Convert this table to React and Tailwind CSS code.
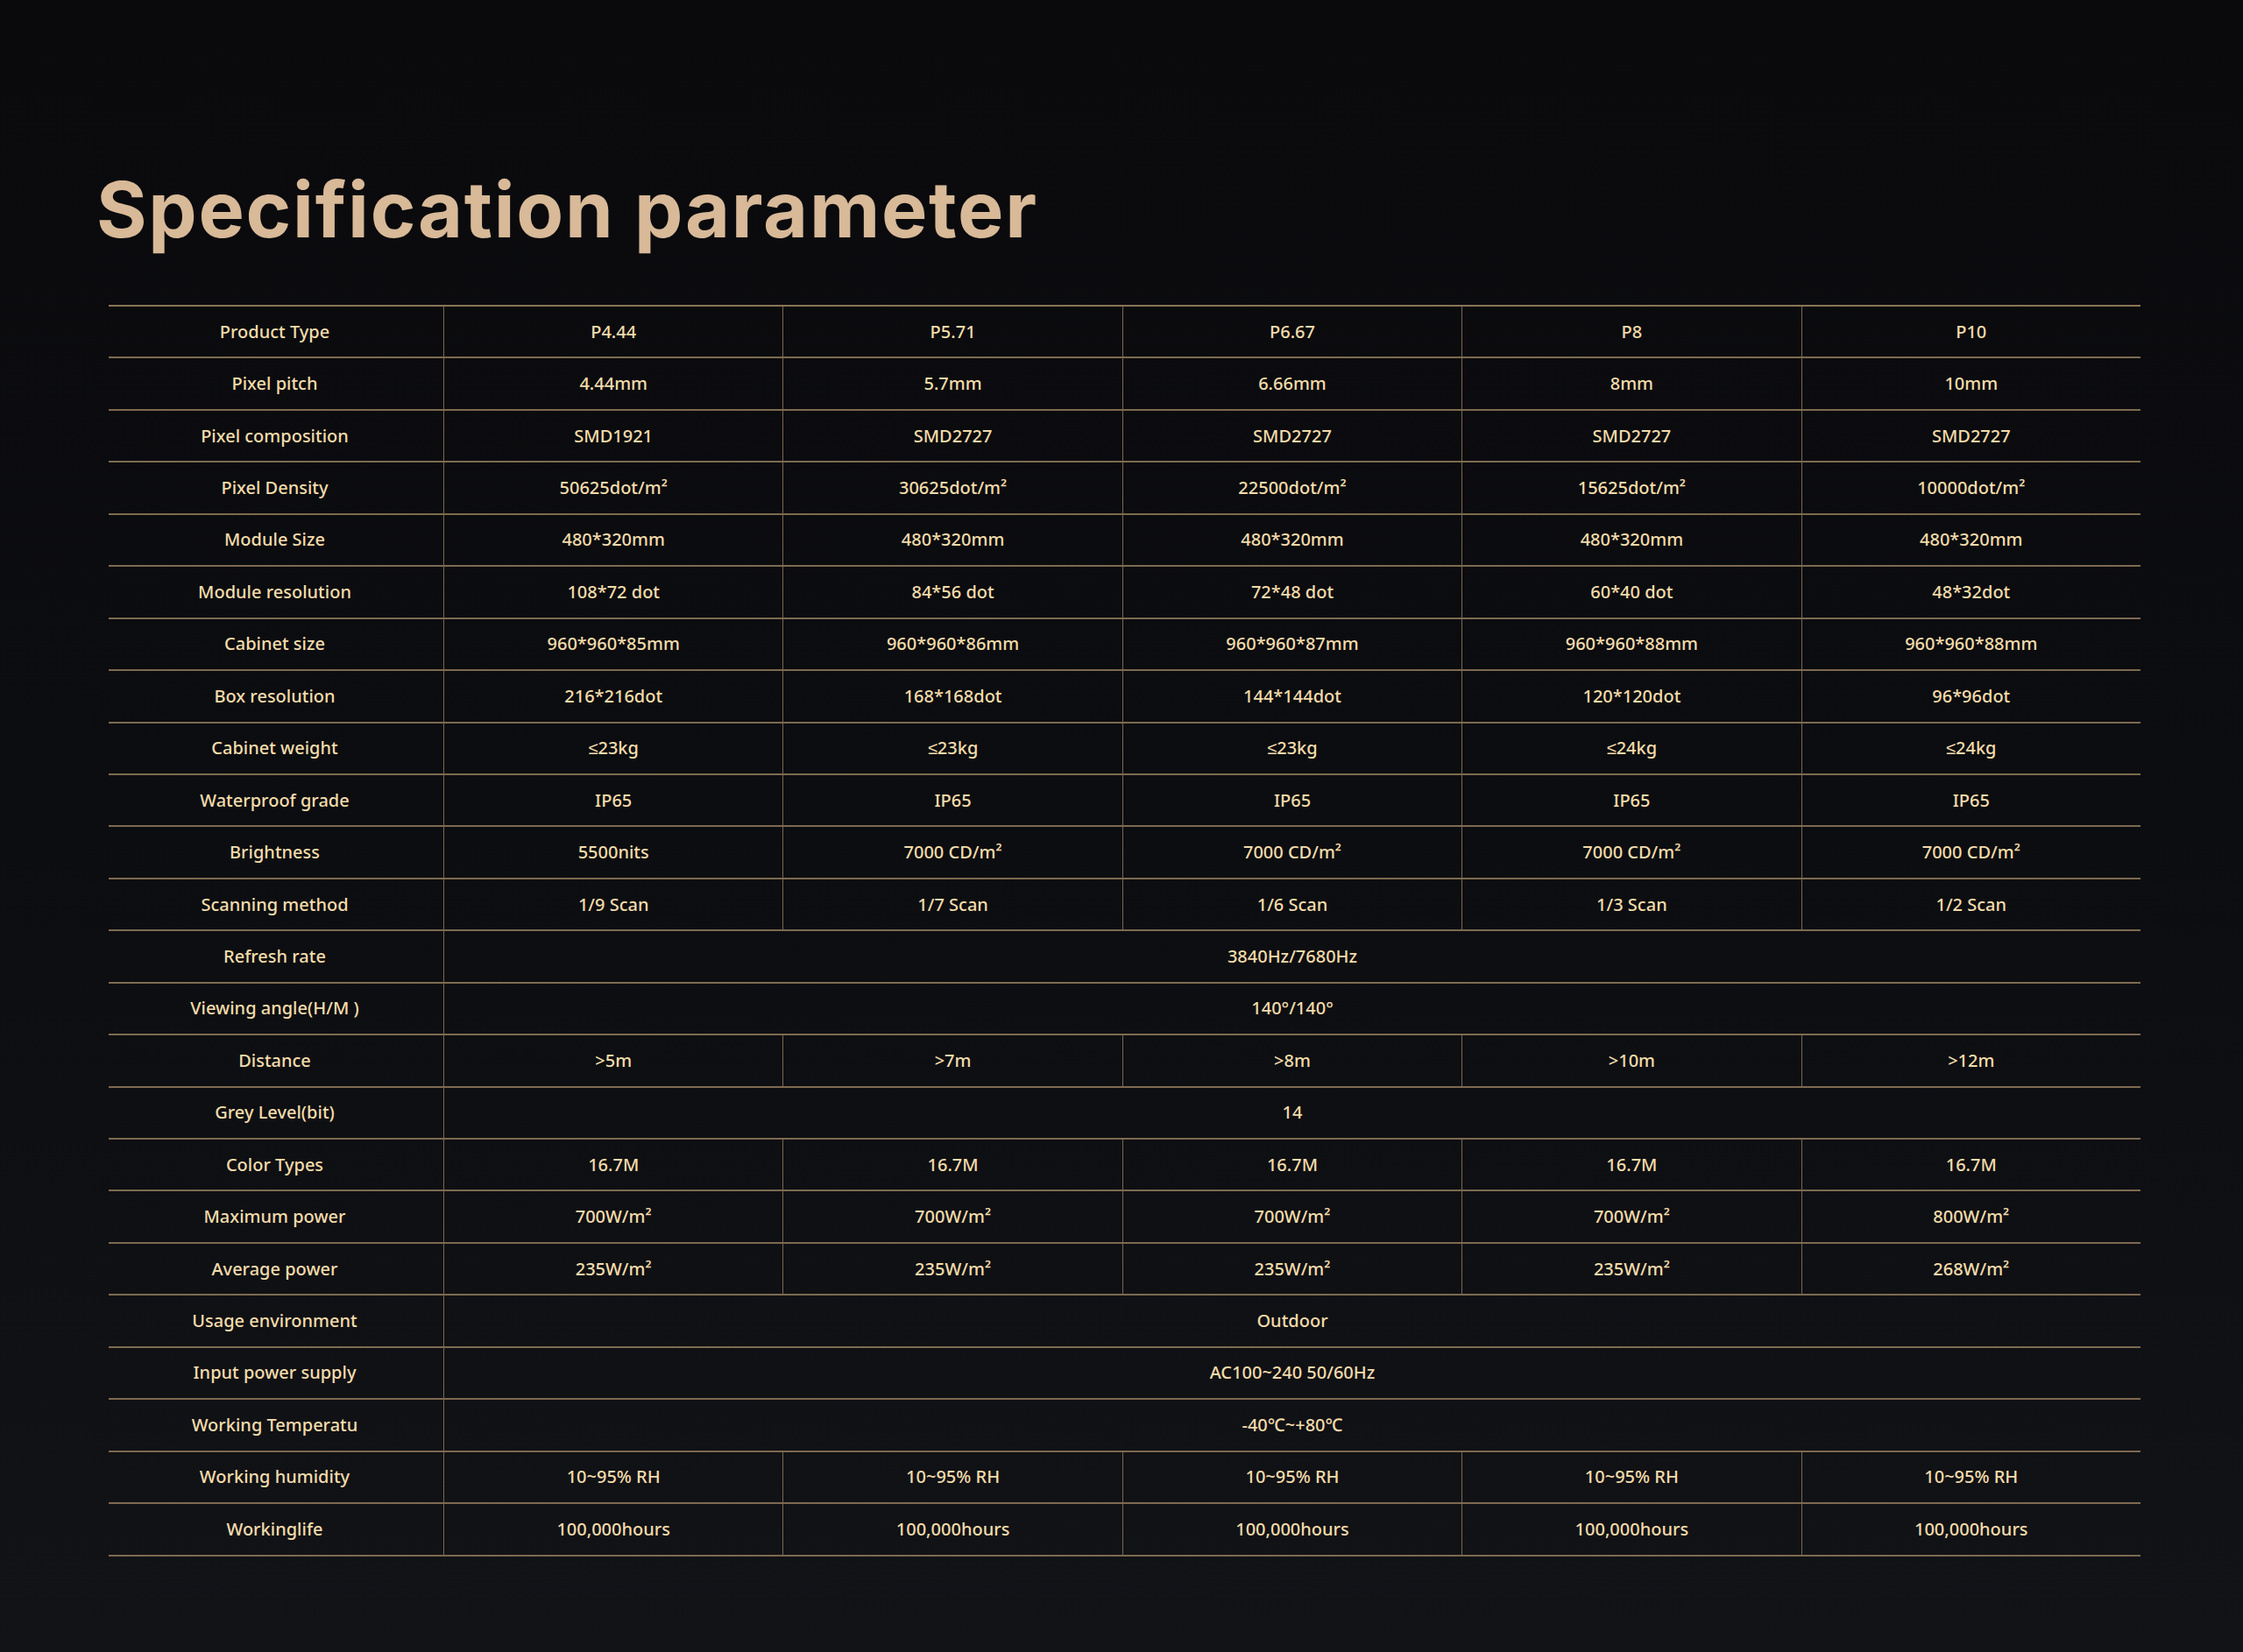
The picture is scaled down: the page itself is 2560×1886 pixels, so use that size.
const rows = [
  ['Product Type', ['P4.44', 'P5.71', 'P6.67', 'P8', 'P10']],
  ['Pixel pitch', ['4.44mm', '5.7mm', '6.66mm', '8mm', '10mm']],
  ['Pixel composition', ['SMD1921', 'SMD2727', 'SMD2727', 'SMD2727', 'SMD2727']],
  ['Pixel Density', ['50625dot/m²', '30625dot/m²', '22500dot/m²', '15625dot/m²', '10000dot/m²']],
  ['Module Size', ['480*320mm', '480*320mm', '480*320mm', '480*320mm', '480*320mm']],
  ['Module resolution', ['108*72 dot', '84*56 dot', '72*48 dot', '60*40 dot', '48*32dot']],
  ['Cabinet size', ['960*960*85mm', '960*960*86mm', '960*960*87mm', '960*960*88mm', '960*960*88mm']],
  ['Box resolution', ['216*216dot', '168*168dot', '144*144dot', '120*120dot', '96*96dot']],
  ['Cabinet weight', ['≤23kg', '≤23kg', '≤23kg', '≤24kg', '≤24kg']],
  ['Waterproof grade', ['IP65', 'IP65', 'IP65', 'IP65', 'IP65']],
  ['Brightness', ['5500nits', '7000 CD/m²', '7000 CD/m²', '7000 CD/m²', '7000 CD/m²']],
  ['Scanning method', ['1/9 Scan', '1/7 Scan', '1/6 Scan', '1/3 Scan', '1/2 Scan']],
  ['Refresh rate', '3840Hz/7680Hz'],
  ['Viewing angle(H/M )', '140°/140°'],
  ['Distance', ['>5m', '>7m', '>8m', '>10m', '>12m']],
  ['Grey Level(bit)', '14'],
  ['Color Types', ['16.7M', '16.7M', '16.7M', '16.7M', '16.7M']],
  ['Maximum power', ['700W/m²', '700W/m²', '700W/m²', '700W/m²', '800W/m²']],
  ['Average power', ['235W/m²', '235W/m²', '235W/m²', '235W/m²', '268W/m²']],
  ['Usage environment', 'Outdoor'],
  ['Input power supply', 'AC100~240 50/60Hz'],
  ['Working Temperatu', '-40℃~+80℃'],
  ['Working humidity', ['10~95% RH', '10~95% RH', '10~95% RH', '10~95% RH', '10~95% RH']],
  ['Workinglife', ['100,000hours', '100,000hours', '100,000hours', '100,000hours', '100,000hours']],
]

const Cell = ({ children, wide, first }) => (
  <div
    className={
      'flex items-center justify-center ' +
      (first ? 'pr-[3px] ' : 'border-l border-[#7a6850] ') +
      (wide ? 'col-span-5' : '')
    }
  >
    {children}
  </div>
)

export default function App() {
  return (
    <div className="w-full h-[1886px] bg-gradient-to-b from-[#0a0a0d] via-[#0c0d10] to-[#121317] overflow-hidden">
      <h1 className="pt-[195px] pl-[110px] text-[88px] leading-none font-bold tracking-[1.7px] text-[#d8b998] font-['Inter',sans-serif]">
        Specification parameter
      </h1>
      <div className="ml-[124px] mt-[65px] w-[2319px] border-t-2 border-[#8a7557] font-['Noto_Sans',sans-serif] font-medium text-[20px] text-[#f3dcab]">
        {rows.map(([label, vals]) => (
          <div
            key={label}
            className="grid grid-cols-[382px_repeat(5,1fr)] h-[59.45px] border-b-2 border-[#7d6a50]"
          >
            <Cell first>{label}</Cell>
            {Array.isArray(vals) ? (
              vals.map((v, i) => <Cell key={i}>{v}</Cell>)
            ) : (
              <Cell wide>{vals}</Cell>
            )}
          </div>
        ))}
      </div>
    </div>
  )
}
